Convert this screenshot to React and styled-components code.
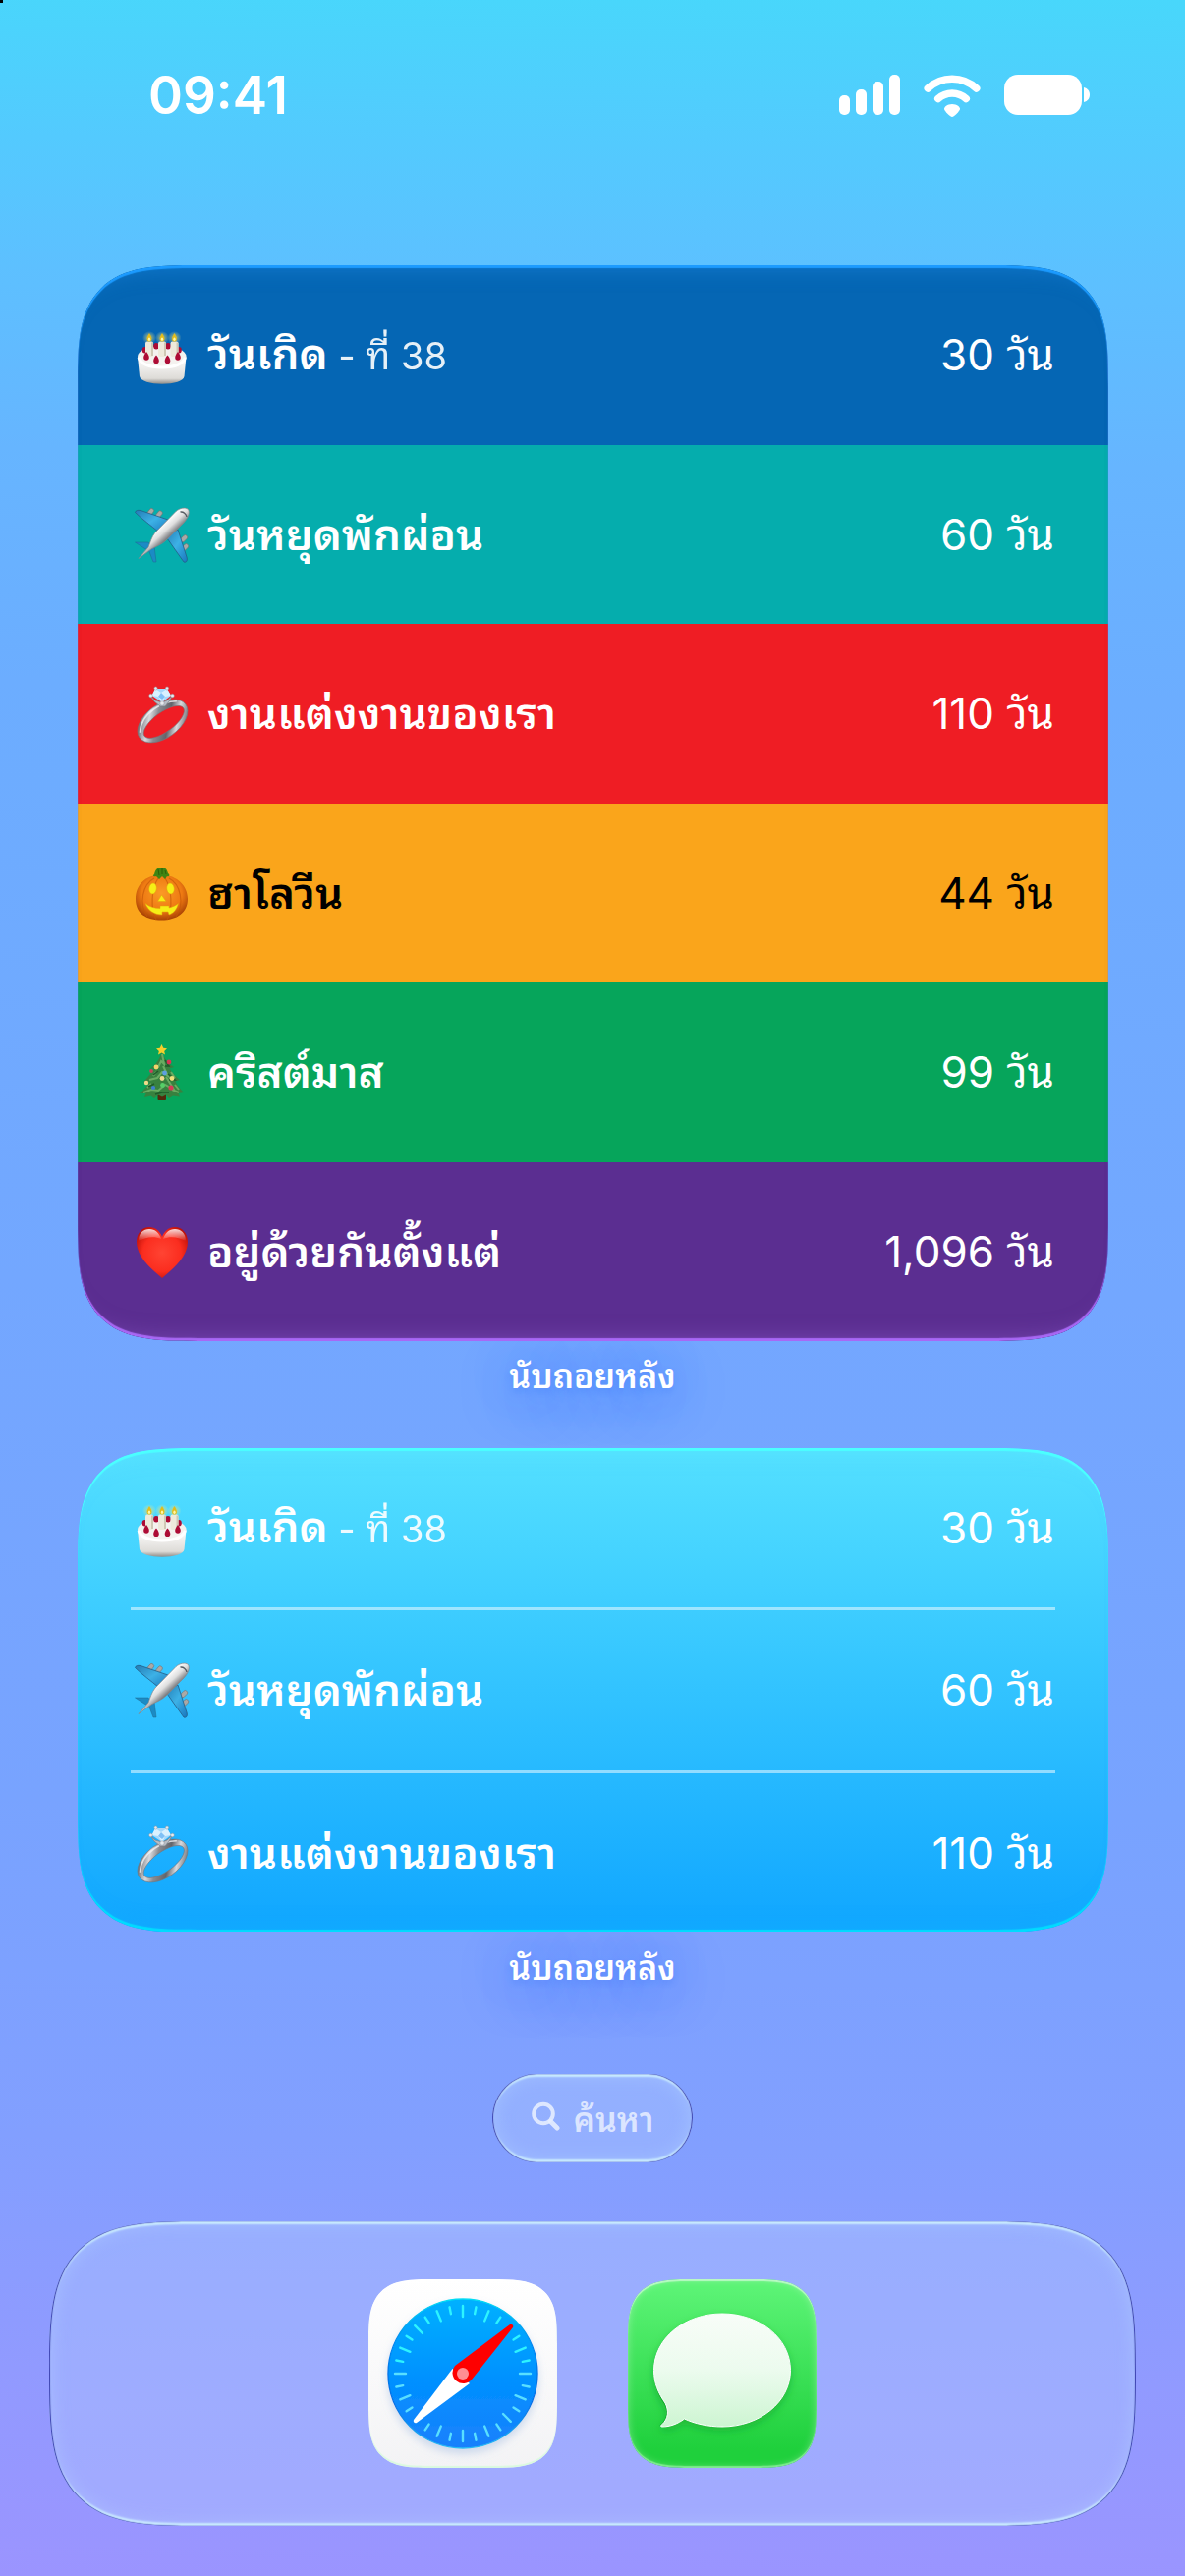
import React from "react";
import styled, { createGlobalStyle, css } from "styled-components";

const GlobalStyle = createGlobalStyle`
  * {
    box-sizing: border-box;
  }
  body {
    margin: 0;
    font-family: Inter, "Noto Sans Thai Looped", "Noto Sans Thai", Loma, Waree, sans-serif;
    color: #fff;
  }
`;

/* rounded corners that ease into the straight edges */
const smooth = (soft, plain) => css`
  border-radius: ${plain}px;
  @supports (corner-shape: superellipse(1.7)) {
    border-radius: ${soft}px;
    corner-shape: superellipse(1.7);
  }
`;

const Screen = styled.div`
  position: relative;
  min-height: 100vh;
  display: flex;
  flex-direction: column;
  align-items: stretch;
  padding-bottom: 51px;
  background: linear-gradient(
    181deg,
    #48d7fb 0%,
    #53cafe 6%,
    #5dc0ff 11%,
    #66b5ff 18%,
    #6cadff 27%,
    #73a7ff 50%,
    #78a3ff 70%,
    #829fff 83%,
    #919aff 92%,
    #9b94ff 100%
  );
  &::before {
    content: "";
    position: absolute;
    top: 0;
    left: 0;
    width: 3px;
    height: 3px;
    background: #000;
  }
`;

const StatusBar = styled.header`
  display: flex;
  align-items: center;
  justify-content: space-between;
  padding: 64px 97px 0 151px;
`;

const Time = styled.time`
  font-size: 53px;
  line-height: 66px;
  font-weight: 600;
`;

const StatusIcons = styled.div`
  display: flex;
  align-items: center;
  gap: 24px;
`;

const Widget = styled.section`
  position: relative;
  display: flex;
  flex-direction: column;
  margin: ${(p) => p.$top}px 78px 0 79px;
  min-height: ${(p) => p.$height}px;
  overflow: hidden;
  ${smooth(123, 86)}
  background: ${(p) => p.$background || "none"};
  &::after {
    content: "";
    position: absolute;
    inset: 0;
    pointer-events: none;
    ${smooth(123, 86)}
    box-shadow: inset 0 3px 1px ${(p) => p.$topEdge}, inset 0 -3px 1px ${(p) => p.$bottomEdge},
      inset 0 24px 20px -20px ${(p) => p.$topGlow}, inset 0 -24px 20px -20px ${(p) => p.$bottomGlow};
  }
`;

const List = styled.ul`
  flex: 1;
  display: flex;
  flex-direction: column;
  list-style: none;
  margin: 0;
  padding: ${(p) => (p.$divided ? "0 54px" : "0")};
  li + li {
    border-top: ${(p) => (p.$divided ? "3px solid rgba(255, 255, 255, 0.5)" : "0")};
  }
`;

const Row = styled.li`
  flex: 1;
  display: flex;
  align-items: center;
  gap: 18px;
  padding: ${(p) => (p.$color ? "0 55px 0 58px" : "0 1px 0 4px")};
  background: ${(p) => p.$color || "none"};
  color: ${(p) => (p.$dark ? "#000" : "#fff")};
  svg {
    flex: none;
  }
`;

const Name = styled.span`
  flex: 1;
  font-size: 44px;
  line-height: 60px;
  font-weight: 600;
`;

const Note = styled.span`
  font-size: 38px;
  font-weight: 400;
  opacity: 0.9;
`;

const Count = styled.span`
  font-size: 44px;
  line-height: 60px;
`;

const Caption = styled.p`
  margin: 9px 0 0;
  text-align: center;
  font-size: 34px;
  line-height: 54px;
  font-weight: 600;
  text-shadow: 0 4px 6px rgba(40, 100, 240, 0.2), 0 8px 50px rgba(40, 110, 255, 0.9);
`;

const glass = css`
  background: rgba(180, 205, 255, 0.36);
  box-shadow: inset 1px 0 1px rgba(40, 42, 165, 0.9), inset -1px 0 1px rgba(40, 42, 165, 0.9),
    inset 0 3px 2px rgba(205, 240, 255, 0.9), inset 0 -3px 2px rgba(205, 240, 255, 0.9),
    inset 0 0 20px rgba(190, 225, 255, 0.4);
`;

const SearchButton = styled.button`
  align-self: center;
  display: flex;
  align-items: center;
  gap: 14px;
  margin: 81px 0 60px;
  padding: 0 40px 4px;
  height: 90px;
  border: 0;
  border-radius: 45px;
  ${glass}
  color: rgba(230, 237, 255, 0.9);
  font: inherit;
  font-size: 34px;
  font-weight: 600;
`;

const Dock = styled.nav`
  display: flex;
  justify-content: center;
  gap: 72px;
  margin: 0 50px;
  padding: 59px 0;
  ${smooth(154, 128)}
  ${glass}
`;

const AppLink = styled.a`
  position: relative;
  display: block;
  width: 192px;
  height: 192px;
  overflow: hidden;
  ${smooth(66, 48)}
  svg {
    display: block;
  }
  &::after {
    content: "";
    position: absolute;
    inset: 0;
    ${smooth(66, 48)}
    box-shadow: inset 0 2px 1px rgba(255, 255, 255, 0.5), inset 0 -2px 1px rgba(190, 255, 200, 0.5),
      inset 0 0 8px rgba(255, 255, 255, 0.35);
  }
`;

const Signal = () => (
  <svg width="62" height="42" viewBox="0 0 62 42" fill="#fff">
    <rect x="0" y="21" width="11" height="20" rx="5" />
    <rect x="17" y="15" width="11" height="26" rx="5" />
    <rect x="34" y="7" width="11" height="34" rx="5" />
    <rect x="51" y="0" width="11" height="41" rx="5" />
  </svg>
);

const Wifi = () => (
  <svg width="58" height="43" viewBox="0 0 58 43" fill="none" stroke="#fff" strokeWidth="7.600" strokeLinecap="round">
    <path d="M4.300 14A36 36 0 0 1 53.700 14" />
    <path d="M14.800 24.500A21 21 0 0 1 43.200 24.500" />
    <path d="M29 30C34 30 37.200 33 37 35C36.800 37 31 43 29 43C27 43 21.200 37 21 35C20.800 33 24 30 29 30Z" fill="#fff" stroke="none" />
  </svg>
);

const Battery = () => (
  <svg width="87" height="42" viewBox="0 0 87 42" fill="#fff">
    <rect width="79" height="41" rx="14" />
    <path d="M81 13C85 14 87 17 87 20.500C87 24 85 27 81 28Z" />
  </svg>
);

const Emoji = ({ children, label }) => (
  <svg width="56" height="62" viewBox="0 -4 56 62" role="img" aria-label={label}>
    {children}
  </svg>
);

const Cake = () => (
  <Emoji label="cake">
    <defs>
      <linearGradient id="cakeSide" x1="0" y1="0" x2="0" y2="1">
        <stop offset="0" stopColor="#fff" />
        <stop offset="0.8" stopColor="#dddbd7" />
        <stop offset="1" stopColor="#8f8c88" />
      </linearGradient>
      <radialGradient id="flame">
        <stop offset="0" stopColor="#ffe94a" stopOpacity="0.800" />
        <stop offset="0.4" stopColor="#f3dc63" stopOpacity="0.450" />
        <stop offset="1" stopColor="#f3f0a0" stopOpacity="0" />
      </radialGradient>
    </defs>
    <g transform="translate(0 3) scale(1 0.96)">
      <path d="M3 27L5 48C6 53 16 56 28 56S50 53 50.500 48L52.500 27Z" fill="url(#cakeSide)" />
      <ellipse cx="27.800" cy="27" rx="24.800" ry="11.500" fill="#f4f2ef" />
      <path d="M4 28C7 36 16 38.500 28 38.500S48.500 36 51.500 28" fill="none" stroke="#fff" strokeWidth="3" />
      <g fill="#ad0c35">
        <ellipse cx="22" cy="16" rx="2.800" ry="3.400" />
        <ellipse cx="34" cy="16" rx="2.800" ry="3.400" />
        <ellipse cx="10.500" cy="20" rx="2.800" ry="3.400" />
        <ellipse cx="45" cy="20" rx="2.800" ry="3.400" />
      </g>
      {[15, 28, 40.5].map((x) => (
        <g key={x}>
          <circle cx={x} cy="7" r="7" fill="url(#flame)" />
          <rect x={x - 4} y="11" width="8" height="16" rx="2" fill="#eeeadb" />
          <rect x={x + 2} y="12" width="2" height="14" fill="#cfc9b5" />
          <path d={`M${x} 2C${x + 3.4} 7 ${x + 3} 11 ${x} 11S${x - 3.4} 7 ${x} 2Z`} fill="#e3bd1c" />
          <ellipse cx={x} cy="8.500" rx="1.200" ry="1.800" fill="#fff7a8" />
        </g>
      ))}
      <g fill="#ad0c35">
        <path d="M12 22C16 27 15.500 31 12 31S8 27 12 22Z" />
        <path d="M22 25.500C26 30 25.500 34.500 22 34.500S18 30 22 25.500Z" />
        <path d="M33.500 25.500C37.500 30 37 34.500 33.500 34.500S29.500 30 33.500 25.500Z" />
        <path d="M44 22C48 27 47.500 31 44 31S40 27 44 22Z" />
      </g>
    </g>
  </Emoji>
);

const Plane = () => (
  <Emoji label="plane">
    <defs>
      <linearGradient id="planeBody" gradientUnits="userSpaceOnUse" x1="26" y1="18" x2="36" y2="29">
        <stop offset="0" stopColor="#fff" />
        <stop offset="0.5" stopColor="#dedede" />
        <stop offset="1" stopColor="#77787c" />
      </linearGradient>
      <linearGradient id="wing" x1="0" y1="0" x2="1" y2="1">
        <stop offset="0" stopColor="#237cb4" />
        <stop offset="0.5" stopColor="#3db1e6" />
        <stop offset="1" stopColor="#1877bd" />
      </linearGradient>
    </defs>
    <g fill="#aaa8a6" stroke="#76706c" strokeWidth="0.600">
      <rect x="14" y="0" width="4.500" height="8" rx="2" transform="rotate(40 16 4)" />
      <rect x="23" y="2.500" width="4.500" height="8" rx="2" transform="rotate(40 25 6)" />
      <rect x="48" y="27" width="4.500" height="8" rx="2" transform="rotate(45 50 31)" />
      <rect x="49" y="36" width="4.500" height="8" rx="2" transform="rotate(45 51 40)" />
    </g>
    <path d="M.500 4.500C1 2.500 3 2 6 2.500L34 12L25 25C17 18 7 11 .500 4.500Z" fill="url(#wing)" stroke="#245d86" strokeWidth="0.800" />
    <path d="M44 22L53 50C54 53 53 56 50 55L31 28Z" fill="url(#wing)" stroke="#245d86" strokeWidth="0.800" />
    <path d="M.500 35L14 35L18 41L13 43Z" fill="#1b8bc5" stroke="#20688f" strokeWidth="0.500" />
    <path d="M14 42L20 39L22 55L19 55Z" fill="#1b8bc5" stroke="#20688f" strokeWidth="0.500" />
    <path d="M54.500 1.500C51.500 -1 46 0 42 3.500L21 25C17 30 16 35 14 40L4 51.500L17 42C22 39 28 37 32 33L50 15C55 9.500 56.500 4.500 54.500 1.500Z" fill="url(#planeBody)" stroke="#85868a" strokeWidth="0.700" />
    <path d="M46.500 4C49.500 3.500 52.500 6 53 9" fill="none" stroke="#555a60" strokeWidth="1.400" />
  </Emoji>
);

const Ring = () => (
  <Emoji label="ring">
    <defs>
      <linearGradient id="ringBand" gradientUnits="userSpaceOnUse" x1="12" y1="18" x2="46" y2="54">
        <stop offset="0" stopColor="#6d6e73" />
        <stop offset="0.2" stopColor="#d9dade" />
        <stop offset="0.36" stopColor="#8a8c92" />
        <stop offset="0.6" stopColor="#63656b" />
        <stop offset="0.78" stopColor="#d8d9dd" />
        <stop offset="1" stopColor="#66686e" />
      </linearGradient>
    </defs>
    <g transform="rotate(-36 28.500 35)">
      <path
        fillRule="evenodd"
        d="M-.500 35A29 17 0 1 0 57.500 35A29 17 0 1 0 -.500 35ZM4.500 36.500A24.500 10 0 1 1 53.500 36.500A24.500 10 0 1 1 4.500 36.500Z"
        fill="url(#ringBand)"
        stroke="#75777d"
        strokeWidth="0.600"
      />
      <path d="M3 31C10 21.500 20 20 28.500 20S44 21 52 27" fill="none" stroke="#f2f3f5" strokeWidth="1.600" opacity="0.800" />
    </g>
    <path d="M16 9L20 15L26 20L31 20L35 15L38.500 9L33 14L28 16L21 14Z" fill="#b9bec6" stroke="#7d828a" strokeWidth="0.700" />
    <path d="M21 2L33 2L37 9L28 16L17.500 9Z" fill="#a6d8fb" />
    <path d="M21 2L27 6L33 2L37 9L31 10L28 16L24 10L17.500 9Z" fill="#d9f1ff" />
    <path d="M24 10L27 6L31 10L28 13Z" fill="#7fc0f6" />
    <g fill="#e6e9ee" stroke="#8f959d" strokeWidth="0.500">
      <circle cx="21.500" cy="1.500" r="1.600" />
      <circle cx="33" cy="1.500" r="1.600" />
      <circle cx="16.500" cy="9" r="1.800" />
      <circle cx="38.500" cy="9" r="1.800" />
      <circle cx="28" cy="17" r="2.200" />
    </g>
  </Emoji>
);

const Pumpkin = () => (
  <Emoji label="pumpkin">
    <defs>
      <radialGradient id="pumpkinSkin" cx="0.5" cy="0.4" r="0.6">
        <stop offset="0" stopColor="#fb9a26" />
        <stop offset="0.65" stopColor="#ee7a12" />
        <stop offset="1" stopColor="#a94204" />
      </radialGradient>
    </defs>
    <path d="M27 9C12 8 1 18 1 33S12 54.500 27.500 54.500S54 47 54 33S42 8 27 9Z" fill="url(#pumpkinSkin)" />
    <g fill="none" stroke="#c55808" strokeWidth="1.200" opacity="0.650">
      <path d="M20 12C8 18 4 38 13 51" />
      <path d="M24 12C17 22 16 44 22 54" />
      <path d="M31 12C38 22 39 44 33 54" />
      <path d="M35 12C47 18 51 38 42 51" />
    </g>
    <path d="M20 8C21 3.500 23 1 27 1S33 2.500 34 7C36 8 36 11 33 10L31 13L28 10L25 13L22 10C19 11 18 9 20 8Z" fill="#3f8412" />
    <path d="M24 3L25 9M28 2L28 8M31 4L32 8" stroke="#285c08" strokeWidth="0.900" />
    <g fill="#f6ee16" stroke="#e0a30b" strokeWidth="0.500">
      <ellipse cx="18.500" cy="22.500" rx="3.800" ry="5.500" transform="rotate(8 18.500 22.500)" />
      <ellipse cx="36.500" cy="22.500" rx="3.800" ry="5.500" transform="rotate(-8 36.500 22.500)" />
      <path d="M27.500 29L32 35.500H23.500Z" />
      <path d="M11 37.500C15 41 20 42.500 26 42.500L26 40L35 40L35 42C39 41 42 39.500 44.500 37.500C43 43 40 47.500 35 49L34 46L28 46L28 49C20 49 14 45 11 37.500Z" />
    </g>
  </Emoji>
);

const Tree = () => (
  <Emoji label="tree">
    <rect x="23.500" y="46" width="8.500" height="10" rx="1" fill="#54280c" />
    <path
      d="M27.500 7C31 15 35 19 40 22L35.500 23.500C38 28 42 32 46 35L41.500 36.500C43 41 47 45 50 48L44.500 49L46 52.500L39 51.500L35 54L32 50.500L28 52.500L24 50.500L20 54L16.500 51.500L10 53L11.500 49L5 49C9 46 13 41 15 37L9 37.500C13 33 17 28 20 23.500L16 23.500C22 19 25 15 27.500 7Z"
      fill="#38813f"
    />
    <path
      d="M28 9L30 19L27 16L24 22L21 22M29 21L34 31L28 27L23 33L15 35M32 32L40 45L31 40L24 46L17 45L9 48M38 45L45 48M19 31L22 27M37 27L41 33M13 43L17 39M41 40L45 45"
      fill="none"
      stroke="#69ab62"
      strokeWidth="2"
    />
    <path d="M31 15L35 21L31 21M24 26L19 30M34 29L41 35L35 35M20 39L14 42M35 48L28 48L21 50" fill="none" stroke="#1f5a2a" strokeWidth="1.500" />
    <path d="M27.500 -1L29.300 2.700L33 3.200L30.200 6L31 9.500L27.500 7.500L24 9.500L24.800 6L22 3.200L25.700 2.700Z" fill="#f6cf2b" />
    <g>
      <circle cx="35" cy="17" r="2.400" fill="#d63553" />
      <circle cx="22" cy="22" r="2.400" fill="#f3d56c" />
      <circle cx="17" cy="26" r="1.900" fill="#c9405a" />
      <circle cx="30.500" cy="28" r="2.400" fill="#5c9fe0" />
      <circle cx="38" cy="33.500" r="2.400" fill="#f2e07b" />
      <circle cx="28" cy="33.500" r="2.400" fill="#efd98b" />
      <circle cx="12" cy="38" r="2.200" fill="#f1db8a" />
      <circle cx="28.500" cy="40.500" r="2.400" fill="#55cf68" />
      <circle cx="19" cy="43" r="2.100" fill="#3f7fd0" />
      <circle cx="37" cy="43" r="2.600" fill="#d43b55" />
    </g>
  </Emoji>
);

const Heart = () => (
  <Emoji label="heart">
    <defs>
      <radialGradient id="heartFill" cx="0.5" cy="0.5" r="0.62">
        <stop offset="0" stopColor="#ff4433" />
        <stop offset="0.6" stopColor="#fb2d1f" />
        <stop offset="1" stopColor="#b50c06" />
      </radialGradient>
      <linearGradient id="heartShine" x1="0" y1="0" x2="0" y2="1">
        <stop offset="0" stopColor="#fff" stopOpacity="0.850" />
        <stop offset="1" stopColor="#fff" stopOpacity="0" />
      </linearGradient>
    </defs>
    <path d="M28 54C18 45 2 33 2 17C2 8 8 2 15 2C21 2 26 6 28 12C30 6 35 2 41 2C48 2 54 8 54 17C54 33 38 45 28 54Z" fill="url(#heartFill)" />
    <path d="M4 16C4 8 9 4 15 4S25 8 27 14C20 11 12 12 4 16Z" fill="url(#heartShine)" />
    <path d="M29 14C31 8 35 4 41 4S52 8 52 16C44 12 36 11 29 14Z" fill="url(#heartShine)" />
  </Emoji>
);

const SearchIcon = () => (
  <svg width="29" height="30" viewBox="0 0 29 30" fill="none" stroke="currentColor" strokeLinecap="round">
    <circle cx="12" cy="12.500" r="9.800" strokeWidth="4" />
    <path d="M19.500 20.500L26 27" strokeWidth="5" />
  </svg>
);

// the two diagonal marks under the needle are left out
const ticks = Array.from({ length: 32 }, (_, i) => i).filter((i) => i !== 4 && i !== 20);

const SafariIcon = () => (
  <svg width="192" height="192" viewBox="0 0 192 192">
    <defs>
      <linearGradient id="safariPlate" x1="0" y1="0" x2="0" y2="1">
        <stop offset="0" stopColor="#fff" />
        <stop offset="1" stopColor="#f3f3f5" />
      </linearGradient>
      <linearGradient id="safariDial" x1="0" y1="0" x2="0" y2="1">
        <stop offset="0" stopColor="#00b1ff" />
        <stop offset="0.55" stopColor="#0090ff" />
        <stop offset="1" stopColor="#1a80fc" />
      </linearGradient>
      <linearGradient id="safariRim" x1="0" y1="0" x2="0" y2="1">
        <stop offset="0" stopColor="#00ddf5" />
        <stop offset="0.3" stopColor="#0086f0" />
        <stop offset="0.7" stopColor="#0070e6" />
        <stop offset="1" stopColor="#22bdf5" />
      </linearGradient>
      <filter id="safariShadow" x="-20%" y="-20%" width="140%" height="140%">
        <feDropShadow dx="0" dy="5" stdDeviation="4" floodColor="#7fa4d8" floodOpacity="0.350" />
      </filter>
    </defs>
    <rect width="192" height="192" fill="url(#safariPlate)" />
    <circle cx="96" cy="96" r="76" fill="url(#safariDial)" stroke="url(#safariRim)" strokeWidth="1.500" filter="url(#safariShadow)" />
    {ticks.map((i) => (
      <line
        key={i}
        x1="96"
        x2="96"
        y1="27"
        y2={i % 2 ? 34 : 38}
        stroke={i < 8 || i > 24 ? "#2df3ff" : "#58dfff"}
        strokeWidth="2.400"
        strokeLinecap="round"
        transform={`rotate(${i * 11.25} 96 96)`}
      />
    ))}
    <path d="M85.500 91L46 143C45 145 47 147 49 146L103 106Z" fill="#fff" />
    <path d="M88 88L144 46C146 45 148 47 147 49L105 102A11 11 0 1 1 88 88Z" fill="#fe0000" />
    <circle cx="96" cy="96" r="6" fill="#ff8e93" />
  </svg>
);

const MessagesIcon = () => (
  <svg width="192" height="192" viewBox="0 0 192 192">
    <defs>
      <linearGradient id="msgPlate" x1="0" y1="0" x2="0" y2="1">
        <stop offset="0.05" stopColor="#5bf375" />
        <stop offset="0.9" stopColor="#1fd03c" />
      </linearGradient>
      <linearGradient id="msgBubble" x1="0" y1="0" x2="0" y2="1">
        <stop offset="0" stopColor="#f8fdf8" />
        <stop offset="0.5" stopColor="#ecfbee" />
        <stop offset="1" stopColor="#cdf5d2" />
      </linearGradient>
      <filter id="msgShadow" x="-20%" y="-20%" width="140%" height="140%">
        <feDropShadow dx="0" dy="4" stdDeviation="4" floodColor="#0a9a26" floodOpacity="0.500" />
      </filter>
    </defs>
    <rect width="192" height="192" fill="url(#msgPlate)" />
    <path
      d="M96 35C134 35 166 60 166 92.500S134 150 96 150C82 150 68 147 57.500 142C51 147 43 150 35 150C32 150 32 148 34 147C39 143 41 135 37 127C30 117 26 106 26 92.500C26 60 58 35 96 35Z"
      fill="#0fa92b"
      filter="url(#msgShadow)"
    />
    <path
      d="M96 35C134 35 165.500 60 165.500 92.500S134 150 96 150C82 150 68 147 57.500 142C51 147 43 150 35 150C33 150 33 149 35 147.500C41 142 42 134 38 126C31 116 26.500 106 26.500 92.500C26.500 60 58 35 96 35Z"
      fill="url(#msgBubble)"
      stroke="#fff"
      strokeWidth="1"
    />
  </svg>
);

const events = [
  { icon: Cake, name: "วันเกิด", note: "- ที่ 38", days: "30", color: "#0566b4" },
  { icon: Plane, name: "วันหยุดพักผ่อน", days: "60", color: "#05adad" },
  { icon: Ring, name: "งานแต่งงานของเรา", days: "110", color: "#ef1d24" },
  { icon: Pumpkin, name: "ฮาโลวีน", days: "44", color: "#faa51b", dark: true },
  { icon: Tree, name: "คริสต์มาส", days: "99", color: "#06a55b" },
  { icon: Heart, name: "อยู่ด้วยกันตั้งแต่", days: "1,096", color: "#5b2e91" },
];

const EventRow = ({ event, colored }) => {
  const Icon = event.icon;
  return (
    <Row $color={colored && event.color} $dark={colored && event.dark}>
      <Icon />
      <Name>
        {event.name}
        {event.note && <Note> {event.note}</Note>}
      </Name>
      <Count>{event.days} วัน</Count>
    </Row>
  );
};

export default function App() {
  return (
    <>
      <GlobalStyle />
      <Screen>
        <StatusBar>
          <Time>09:41</Time>
          <StatusIcons>
            <Signal />
            <Wifi />
            <Battery />
          </StatusIcons>
        </StatusBar>

        <Widget
          $top={140}
          $height={1095}
          $topEdge="#1c9bff"
          $bottomEdge="#a868f5"
          $topGlow="rgba(30, 140, 230, 0.5)"
          $bottomGlow="rgba(140, 90, 200, 0.5)"
        >
          <List>
            {events.map((event) => (
              <EventRow key={event.name} event={event} colored />
            ))}
          </List>
        </Widget>
        <Caption>นับถอยหลัง</Caption>

        <Widget
          $top={46}
          $height={493}
          $background="linear-gradient(#54e0ff, #10a6ff)"
          $topEdge="#4bffff"
          $bottomEdge="#00dcff"
          $topGlow="rgba(90, 235, 255, 0.5)"
          $bottomGlow="rgba(20, 180, 255, 0.5)"
        >
          <List $divided>
            {events.slice(0, 3).map((event) => (
              <EventRow key={event.name} event={event} />
            ))}
          </List>
        </Widget>
        <Caption>นับถอยหลัง</Caption>

        <SearchButton type="button">
          <SearchIcon />
          ค้นหา
        </SearchButton>

        <Dock>
          <AppLink href="#safari" aria-label="Safari">
            <SafariIcon />
          </AppLink>
          <AppLink href="#messages" aria-label="Messages">
            <MessagesIcon />
          </AppLink>
        </Dock>
      </Screen>
    </>
  );
}
